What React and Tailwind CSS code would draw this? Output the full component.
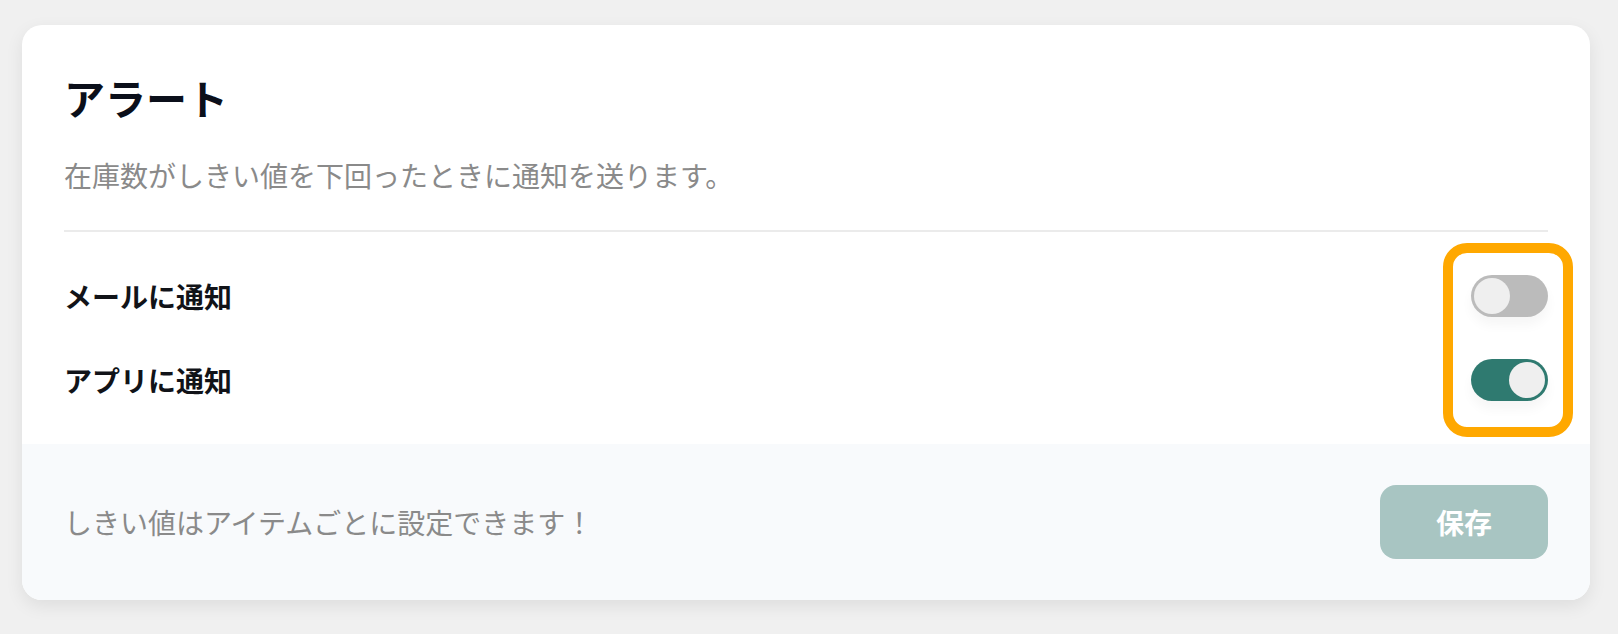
import React, { useState } from "react";

const font = { fontFamily: '"Noto Sans CJK JP", "Noto Sans", sans-serif' };

const Toggle = ({ on, onChange }) => (
  <button
    type="button"
    onClick={onChange}
    className={
      "flex h-[42px] w-[77px] items-center rounded-full p-[3px] shadow-[0_8px_12px_rgba(0,0,0,0.04)] " +
      (on ? "justify-end bg-[#2f7a70]" : "justify-start bg-[#bbbbbb]")
    }
  >
    <span className="block h-[36px] w-[36px] rounded-full bg-[#efefef]" />
  </button>
);

export default function App() {
  const [mail, setMail] = useState(false);
  const [app, setApp] = useState(true);

  return (
    <div className="min-h-[634px] bg-[#f0f0f0] pt-[25px] pl-[22px] pr-[28px]" style={font}>
      <div className="w-[1568px] overflow-hidden rounded-[20px] bg-white shadow-[0_6px_18px_rgba(0,0,0,0.08)]">
        <div className="px-[42px]">
          <h1 className="pt-[48px] text-[41px] leading-[48px] font-bold text-[#0b0f1a]">
            アラート
          </h1>
          <p className="mt-[34px] text-[28px] leading-[40px] text-[#8a8a8a]">
            在庫数がしきい値を下回ったときに通知を送ります。
          </p>
          <div className="mt-[35px] h-[2px] bg-[#ebebeb]" />

          <div className="relative py-[22px]">
            <div className="flex h-[84px] items-center justify-between">
              <span className="text-[28px] font-bold text-[#111318]">メールに通知</span>
              <Toggle on={mail} onChange={() => setMail(!mail)} />
            </div>
            <div className="flex h-[84px] items-center justify-between">
              <span className="text-[28px] font-bold text-[#111318]">アプリに通知</span>
              <Toggle on={app} onChange={() => setApp(!app)} />
            </div>
            <div className="pointer-events-none absolute right-[-25px] top-[11px] h-[194px] w-[130px] rounded-[24px] border-[10px] border-[#ffa800]" />
          </div>
        </div>

        <div className="flex items-center justify-between bg-[#f8fafc] px-[42px] py-[41px]">
          <span className="text-[28px] text-[#8a8a8a]">
            しきい値はアイテムごとに設定できます！
          </span>
          <button
            type="button"
            className="h-[74px] w-[168px] rounded-[16px] bg-[#a8c5c2] text-[28px] font-bold text-white"
          >
            保存
          </button>
        </div>
      </div>
    </div>
  );
}
